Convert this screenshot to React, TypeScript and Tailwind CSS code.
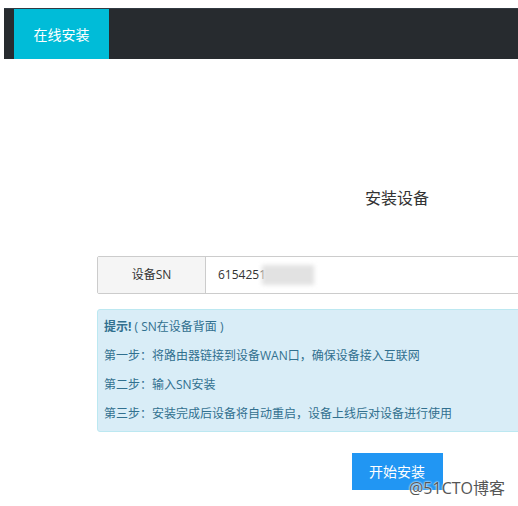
const font = { fontFamily: '"Open Sans", "Noto Sans CJK SC", sans-serif' }

export default function App() {
  return (
    <div className="relative w-[518px] h-[506px] overflow-hidden bg-white text-[#333]" style={font}>
      {/* 顶部导航 */}
      <header className="mt-[8px] ml-[4px] h-[51px] bg-[#272b2f] flex border-t border-[#323a42]">
        <div className="ml-[10px] w-[95px] h-full bg-[#00bcd8] text-white text-[14px] flex items-center justify-center">
          在线安装
        </div>
      </header>

      <main className="ml-[97px] w-[600px]">
        <h2 className="mt-[128px] text-center text-[16px] leading-[22px] font-normal text-[#333]">安装设备</h2>

        <div className="mt-[47px] flex h-[38px] border border-[#ccc] rounded-[2px]">
          <div className="w-[108px] shrink-0 bg-[#f5f5f5] border-r border-[#ccc] flex items-center justify-center text-[12px]">
            设备SN
          </div>
          <div className="flex-1 flex items-center pl-[12px] text-[12px] text-[#333]">
            <span>6154251</span>
            <span className="ml-[-4px] w-[52px] h-[20px] bg-[#e2e2e2] blur-[2px]" />
          </div>
        </div>

        <div className="mt-[15px] h-[123px] bg-[#d9edf7] border border-[#bce8f1] rounded-[3px] px-[6px] pt-[9px] text-[12px] leading-[16px] text-[#31708f] flex flex-col gap-[13px]">
          <p>
            <b>提示!</b> ( SN在设备背面 )
          </p>
          <p>第一步：将路由器链接到设备WAN口，确保设备接入互联网</p>
          <p>第二步：输入SN安装</p>
          <p>第三步：安装完成后设备将自动重启，设备上线后对设备进行使用</p>
        </div>

        <div className="mt-[21px] flex justify-center">
          <button className="w-[91px] h-[37px] bg-[#2196f3] text-white text-[14px]">开始安装</button>
        </div>
      </main>

      <div
        className="absolute left-[409px] top-[478px] text-[16px] leading-[20px] text-[#555]"
        style={{ textShadow: '0 0 2px #fff, 0 0 2px #fff' }}
      >
        @51CTO博客
      </div>
    </div>
  )
}
